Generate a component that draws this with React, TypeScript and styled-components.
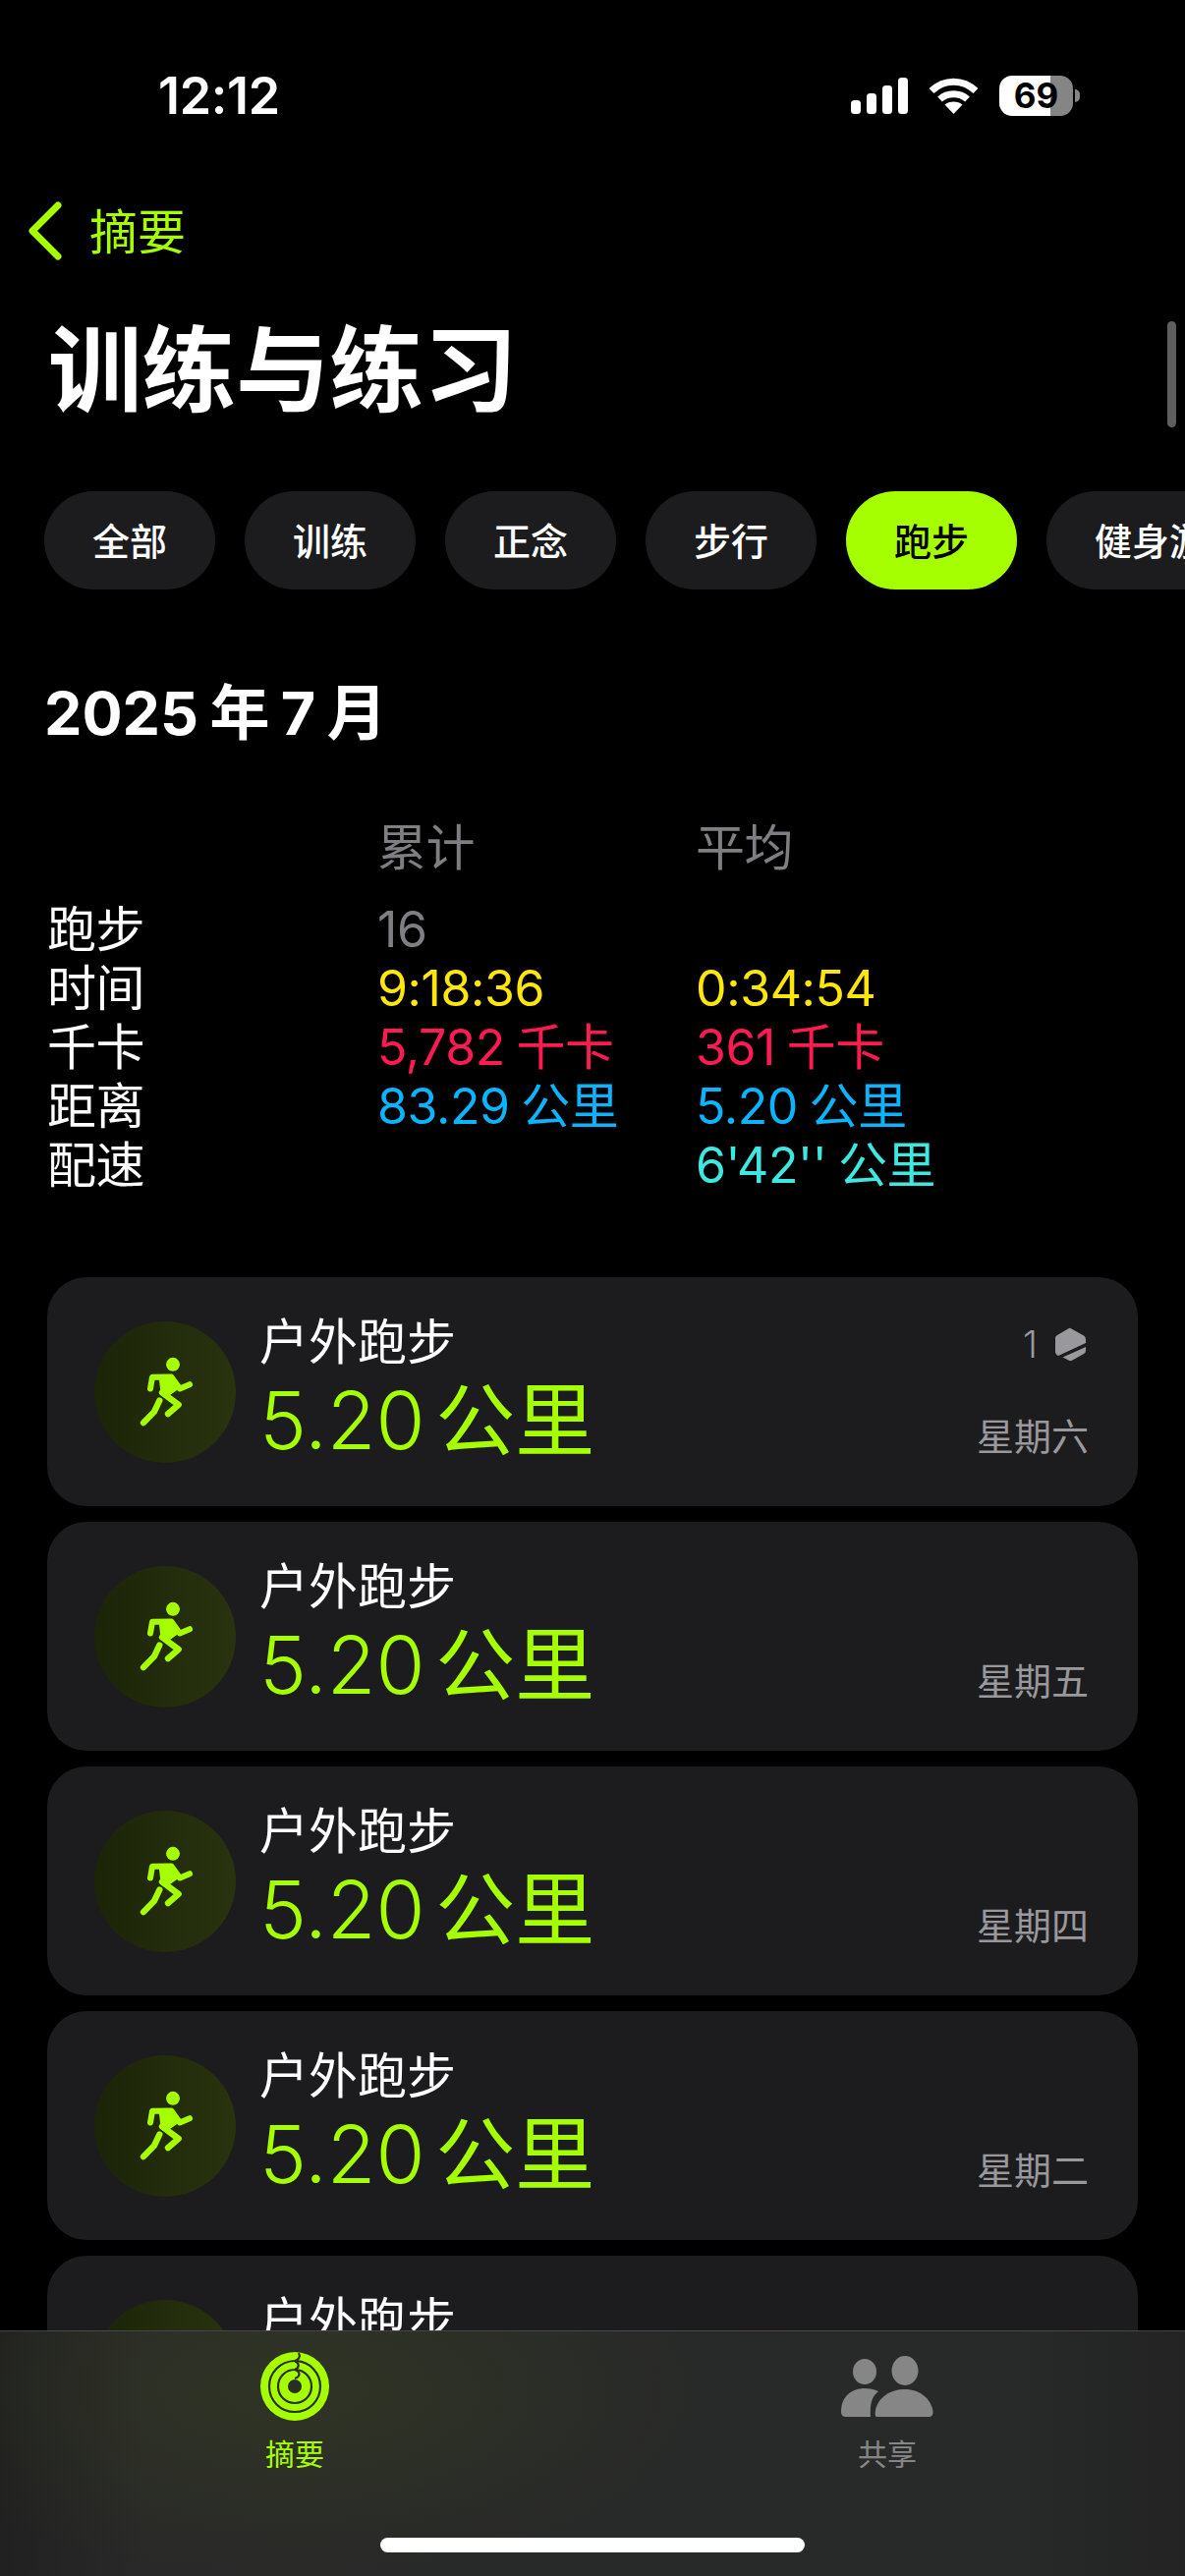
import React from "react";
import styled, { createGlobalStyle } from "styled-components";

const LIME = "#a6ff00";
const SANS = `Inter, "Noto Sans CJK SC", sans-serif`;

const Global = createGlobalStyle`
  html, body { margin: 0; padding: 0; background: #000; }
  body { font-family: ${SANS}; }
`;

const Page = styled.div`
  position: relative;
  width: 1206px;
  height: 2622px;
  overflow: hidden;
  background: #000;
  color: #fff;
`;

const StatusBar = styled.div`
  height: 194px;
  display: flex;
  align-items: center;
  justify-content: space-between;
  padding: 0 114px 0 161px;
`;

const Clock = styled.div`
  font-size: 52px;
  font-weight: 600;
  letter-spacing: -0.3px;
`;

const StatusIcons = styled.div`
  display: flex;
  align-items: center;
  gap: 21px;
`;

const Battery = styled.div`
  position: relative;
  width: 75px;
  height: 41px;
  border-radius: 13px;
  background: linear-gradient(90deg, #fff 0 70%, #858585 70% 100%);
  display: flex;
  align-items: center;
  justify-content: center;
  color: #000;
  font-size: 35px;
  font-weight: 700;
  &::after {
    content: "";
    position: absolute;
    right: -7px;
    top: 14px;
    width: 5px;
    height: 13px;
    border-radius: 0 6px 6px 0;
    background: #858585;
  }
`;

const BackRow = styled.div`
  height: 82px;
  display: flex;
  align-items: center;
  gap: 28px;
  padding: 0 0 0 28px;
  color: ${LIME};
  font-size: 49px;
`;

const BackLabel = styled.span`
  margin-top: -6px;
`;

const Title = styled.h1`
  margin: 49px 0 0 49px;
  height: 104px;
  line-height: 104px;
  font-size: 95.5px;
  font-weight: 700;
`;

const ScrollThumb = styled.div`
  position: absolute;
  top: 327px;
  right: 9px;
  width: 9px;
  height: 108px;
  border-radius: 5px;
  background: #5e5e5e;
`;

const Chips = styled.div`
  display: flex;
  gap: 30px;
  margin-top: 71px;
  padding-left: 45px;
  overflow: hidden;
`;

const Chip = styled.div<{ $active?: boolean }>`
  flex: none;
  height: 100px;
  padding: 0 49px 4px;
  border-radius: 50px;
  box-sizing: border-box;
  display: flex;
  align-items: center;
  justify-content: center;
  white-space: nowrap;
  font-size: 38px;
  font-weight: 500;
  background: ${(p) => (p.$active ? LIME : "#1c1c1e")};
  color: ${(p) => (p.$active ? "#000" : "#fff")};
`;

const Month = styled.h2`
  margin: 85px 0 0 45px;
  height: 82px;
  line-height: 82px;
  font-size: 61px;
  font-weight: 700;
  word-spacing: -3px;
`;

const Stats = styled.div`
  margin: 66px 0 0 48px;
  display: grid;
  grid-template-columns: 336px 324px 1fr;
  grid-template-rows: 83px;
  grid-auto-rows: 60px;
  font-size: 50px;
  line-height: 60px;
  font-weight: 400;
  letter-spacing: -0.4px;
  word-spacing: -2px;
  white-space: nowrap;
`;

const Head = styled.div`
  color: #7f7f83;
`;

const Stat = styled.div<{ $color?: string }>`
  color: ${(p) => p.$color || "#fff"};
`;

const List = styled.div`
  margin: 84px 48px 0 48px;
  height: 1072px;
  overflow: hidden;
  display: flex;
  flex-direction: column;
  gap: 16px;
`;

const Card = styled.div`
  height: 233px;
  flex: none;
  box-sizing: border-box;
  border-radius: 40px;
  background: #1c1c1e;
  display: flex;
  padding: 0 50px 0 48px;
  align-items: center;
`;

const IconDisc = styled.div`
  flex: none;
  width: 144px;
  height: 144px;
  padding-left: 2px;
  box-sizing: border-box;
  border-radius: 50%;
  background: linear-gradient(90deg, #1c2408 0%, #29330f 100%);
  display: flex;
  align-items: center;
  justify-content: center;
  margin-right: 24px;
`;

const CardMain = styled.div`
  flex: 1;
  padding-bottom: 5px;
`;

const CardTitle = styled.div`
  font-size: 50px;
  line-height: 64px;
  font-weight: 400;
`;

const Distance = styled.div`
  color: ${LIME};
  font-size: 81px;
  line-height: 96px;
  font-weight: 340;
  word-spacing: -12px;
`;

const Unit = styled.span`
  font-weight: 400;
`;

const CardSide = styled.div`
  align-self: stretch;
  display: flex;
  flex-direction: column;
  align-items: flex-end;
  color: #98989d;
`;

const Award = styled.div`
  display: flex;
  align-items: center;
  gap: 18px;
  height: 36px;
  margin: 50px 3px 0 0;
  font-size: 38px;
  font-weight: 300;
`;

const Day = styled.div`
  margin-top: auto;
  margin-bottom: 48px;
  font-size: 38px;
  line-height: 46px;
`;

const TabBar = styled.div`
  position: absolute;
  left: 0;
  right: 0;
  top: 2372px;
  bottom: 0;
  border-top: 1px solid #47474a;
  background:
    radial-gradient(ellipse 420px 190px at 300px 60px, rgba(84, 110, 10, 0.16), transparent),
    linear-gradient(90deg, #212121 0%, #292929 12%, #282929 85%, #232323 100%);
  display: grid;
  grid-template-columns: 600px 606px;
`;

const Tab = styled.div<{ $active?: boolean }>`
  display: flex;
  flex-direction: column;
  align-items: center;
  color: ${(p) => (p.$active ? LIME : "#868686")};
  font-size: 30px;
  line-height: 36px;
  padding-top: 21px;
`;

const TabIcon = styled.div`
  height: 70px;
  margin-bottom: 16px;
  display: flex;
  align-items: center;
`;

const HomeBar = styled.div`
  position: absolute;
  left: 387px;
  bottom: 24px;
  width: 432px;
  height: 15px;
  border-radius: 8px;
  background: #fff;
`;

const Signal = () => (
  <svg width="58" height="37" viewBox="0 0 58 37" fill="#fff">
    <rect x="0" y="23" width="10" height="14" rx="3.5" />
    <rect x="16" y="16" width="10" height="21" rx="3.5" />
    <rect x="32" y="8" width="10" height="29" rx="3.5" />
    <rect x="48" y="0" width="10" height="37" rx="3.5" />
  </svg>
);

const Wifi = () => (
  <svg width="51" height="37" viewBox="0 0 51 37" fill="none" stroke="#fff" strokeWidth="7">
    <path d="M3 13.5 C16 1 35 1 48 13.5" />
    <path d="M11.5 22 C19 15 32 15 39.5 22" />
    <path d="M25.5 37 L16.5 27.5 C21 23.5 30 23.5 34.5 27.5 Z" fill="#fff" stroke="none" />
  </svg>
);

const Chevron = () => (
  <svg width="35" height="60" viewBox="0 0 35 60" fill="none" stroke={LIME} strokeWidth="7" strokeLinecap="round" strokeLinejoin="round">
    <path d="M31 4 L5 30 L31 56" />
  </svg>
);

const Runner = () => (
  <svg width="60" height="77" viewBox="420 290 180 230" fill={LIME} stroke={LIME} strokeLinecap="round" strokeLinejoin="round">
    <circle cx="531" cy="322" r="21" stroke="none" />
    <path d="M462 396 L468 361 L526 360 L552 396 L582 383" fill="none" strokeWidth="18" />
    <path d="M492 362 L528 362 L540 398 L520 412 L497 404 Z" strokeWidth="8" />
    <path d="M498 408 L548 445 L516 473" fill="none" strokeWidth="19" />
    <path d="M490 432 L474 466 L441 500" fill="none" strokeWidth="19" />
  </svg>
);

const Hexagon = () => (
  <svg width="31" height="35" viewBox="0 0 31 35">
    <path d="M15.5 1 L29 8.5 Q31 9.5 31 12 V16 L3 29 Q0 27.5 0 24.5 V10.5 Q0 9 2 8 L13.5 1.2 Q15 .5 15.5 1 Z" fill="#98989d" />
    <path d="M31 20 V24 Q31 26 29 27 L17 33.8 Q15.5 34.6 14 33.8 L7.5 30.5 Z" fill="#98989d" />
  </svg>
);

const Rings = () => (
  <svg width="70" height="70" viewBox="0 0 70 70">
    <circle cx="35" cy="35" r="35" fill={LIME} />
    <g fill="none" stroke="#2a2d22" strokeWidth="2.2">
      <path d="M39 1 C41 5 39 8 35 9 C20 9.5 9 21 9 35 C9 49.5 20.5 61 35 61 C49.5 61 61 49.5 61 35 C61 21 50 10 37 9.2" />
      <path d="M35 9.5 C40 11 40 16 35 18 C25.5 18 18 25.5 18 35 C18 44.5 25.5 52 35 52 C44.5 52 52 44.5 52 35 C52 26 45 18.5 36 18" />
      <path d="M35 18 C41 20 41 25 35 27" />
    </g>
    <circle cx="35" cy="35" r="7" fill="#2a2d22" />
  </svg>
);

const Friends = () => (
  <svg width="94" height="62" viewBox="0 0 94 62" fill="#868686">
    <ellipse cx="24" cy="16" rx="12" ry="13" />
    <ellipse cx="65" cy="15" rx="13.5" ry="15" />
    <path d="M0 57 C0 41 11 33 24 33 C29 33 34 34 38 36 C32 41 29 47 30 62 H5 Q0 62 0 57 Z" />
    <path d="M36 62 Q34 62 35 55 C38 42 50 34 65 34 C80 34 91 43 93.5 56 Q94 62 89 62 Z" />
  </svg>
);

const workouts = [
  { day: "星期六", award: true },
  { day: "星期五" },
  { day: "星期四" },
  { day: "星期二" },
  { day: "星期一" },
];

const filters = ["全部", "训练", "正念", "步行", "跑步", "健身游戏"];

export default function App() {
  return (
    <Page>
      <Global />
      <StatusBar>
        <Clock>12:12</Clock>
        <StatusIcons>
          <Signal />
          <Wifi />
          <Battery>69</Battery>
        </StatusIcons>
      </StatusBar>
      <BackRow>
        <Chevron />
        <BackLabel>摘要</BackLabel>
      </BackRow>
      <Title>训练与练习</Title>
      <ScrollThumb />
      <Chips>
        {filters.map((f) => (
          <Chip key={f} $active={f === "跑步"}>
            {f}
          </Chip>
        ))}
      </Chips>
      <Month>2025 年 7 月</Month>
      <Stats>
        <Head />
        <Head>累计</Head>
        <Head>平均</Head>
        <Stat>跑步</Stat>
        <Stat $color="#7f7f83">16</Stat>
        <Stat />
        <Stat>时间</Stat>
        <Stat $color="#ffe60a">9:18:36</Stat>
        <Stat $color="#ffe60a">0:34:54</Stat>
        <Stat>千卡</Stat>
        <Stat $color="#ff1a52">5,782 千卡</Stat>
        <Stat $color="#ff1a52">361 千卡</Stat>
        <Stat>距离</Stat>
        <Stat $color="#0ab4ff">83.29 公里</Stat>
        <Stat $color="#0ab4ff">5.20 公里</Stat>
        <Stat>配速</Stat>
        <Stat />
        <Stat $color="#3de8e0">6'42'' 公里</Stat>
      </Stats>
      <List>
        {workouts.map((w) => (
          <Card key={w.day}>
            <IconDisc>
              <Runner />
            </IconDisc>
            <CardMain>
              <CardTitle>户外跑步</CardTitle>
              <Distance>
                5.20 <Unit>公里</Unit>
              </Distance>
            </CardMain>
            <CardSide>
              {w.award && (
                <Award>
                  1 <Hexagon />
                </Award>
              )}
              <Day>{w.day}</Day>
            </CardSide>
          </Card>
        ))}
      </List>
      <TabBar>
        <Tab $active>
          <TabIcon>
            <Rings />
          </TabIcon>
          摘要
        </Tab>
        <Tab>
          <TabIcon>
            <Friends />
          </TabIcon>
          共享
        </Tab>
        <HomeBar />
      </TabBar>
    </Page>
  );
}
